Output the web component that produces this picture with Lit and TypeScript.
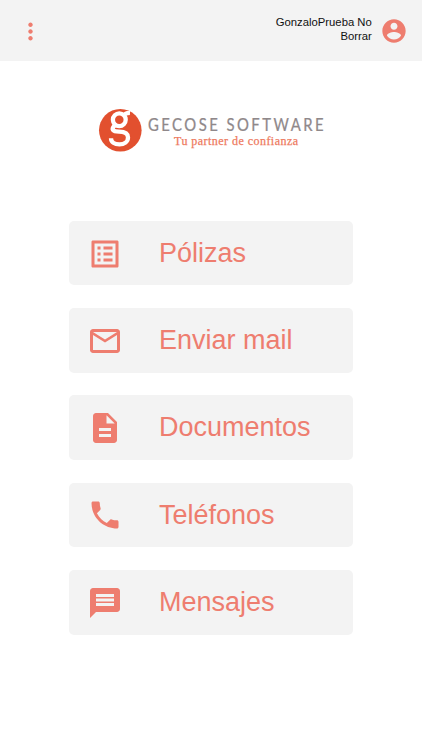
import { LitElement, html, css, svg } from "lit";
import { customElement } from "lit/decorators.js";

const ICONS: Record<string, string> = {
  list: "M19 5v14H5V5h14m1.1-2H3.9c-.5 0-.9.4-.9.9v16.2c0 .4.4.9.9.9h16.2c.4 0 .9-.5.9-.9V3.9c0-.5-.5-.9-.9-.9zM11 7h6v2h-6V7zm0 4h6v2h-6v-2zm0 4h6v2h-6v-2zM7 7h2v2H7V7zm0 4h2v2H7v-2zm0 4h2v2H7v-2z",
  mail: "M22 6c0-1.1-.9-2-2-2H4c-1.1 0-2 .9-2 2v12c0 1.1.9 2 2 2h16c1.1 0 2-.9 2-2V6zm-2 0l-8 5-8-5h16zm0 12H4V8l8 5 8-5v10z",
  doc: "M14 2H6c-1.1 0-1.99.9-1.99 2L4 20c0 1.1.89 2 1.99 2H18c1.1 0 2-.9 2-2V8l-6-6zm2 16H8v-2h8v2zm0-4H8v-2h8v2zm-3-5V3.5L18.5 9H13z",
  phone: "M6.62 10.79c1.44 2.83 3.76 5.14 6.59 6.59l2.2-2.2c.27-.27.67-.36 1.02-.24 1.12.37 2.33.57 3.57.57.55 0 1 .45 1 1V20c0 .55-.45 1-1 1-9.39 0-17-7.61-17-17 0-.55.45-1 1-1h3.5c.55 0 1 .45 1 1 0 1.25.2 2.45.57 3.57.11.35.03.74-.25 1.02l-2.2 2.2z",
  chat: "M20 2H4c-1.1 0-1.99.9-1.99 2L2 22l4-4h14c1.1 0 2-.9 2-2V4c0-1.1-.9-2-2-2zm-2 12H6v-2h12v2zm0-3H6V9h12v2zm0-3H6V6h12v2z",
  more: "M12 8c1.1 0 2-.9 2-2s-.9-2-2-2-2 .9-2 2 .9 2 2 2zm0 2c-1.1 0-2 .9-2 2s.9 2 2 2 2-.9 2-2-.9-2-2-2zm0 6c-1.1 0-2 .9-2 2s.9 2 2 2 2-.9 2-2-.9-2-2-2z",
  account: "M12 2C6.48 2 2 6.48 2 12s4.48 10 10 10 10-4.48 10-10S17.52 2 12 2zm0 3c1.66 0 3 1.34 3 3s-1.34 3-3 3-3-1.34-3-3 1.34-3 3-3zm0 14.2c-2.5 0-4.71-1.28-6-3.22.03-1.99 4-3.08 6-3.08 1.99 0 5.97 1.09 6 3.08-1.29 1.94-3.5 3.22-6 3.22z",
};

const ITEMS = [
  { icon: "list", label: "Pólizas" },
  { icon: "mail", label: "Enviar mail" },
  { icon: "doc", label: "Documentos" },
  { icon: "phone", label: "Teléfonos" },
  { icon: "chat", label: "Mensajes" },
];

const icon = (name: string) =>
  html`<svg class="icon ${name}" viewBox="0 0 24 24">${svg`<path d=${ICONS[name]}></path>`}</svg>`;

@customElement("app-root")
export class AppRoot extends LitElement {
  static styles = css`
    :host { display: block; height: 750px; background: #fff; font-family: "Liberation Sans", Arial, sans-serif; overflow: hidden; }
    .icon { display: block; flex: none; width: 36px; height: 36px; fill: #ee7d6f; }
    header { box-sizing: border-box; height: 61px; padding: 0 14.5px 0 17px; background: #f3f3f3; display: flex; align-items: center; justify-content: space-between; }
    .icon.more { width: 27px; height: 27px; margin-top: 2px; }
    .user { display: flex; align-items: center; gap: 7.7px; }
    .name { width: 100px; text-align: right; font-size: 11.3px; line-height: 13.5px; color: #111; margin-top: -2px; }
    .icon.account { width: 28px; height: 28px; }
    .logo { display: block; width: 240px; height: 50px; margin: 44px 0 0 96px; }
    .brand { font: 16.5px Lato, sans-serif; fill: #8f888a; stroke: #8f888a; stroke-width: 0.25px; }
    .slogan { font: 12px "Liberation Serif", serif; fill: #ee7a60; stroke: #ee7a60; stroke-width: 0.25px; }
    nav { display: flex; flex-direction: column; gap: 22.7px; width: 284px; margin: 65.8px 0 0 69px; }
    .card { display: flex; align-items: center; box-sizing: border-box; height: 64.6px; padding: 1.5px 0 0 18px; gap: 36px; border-radius: 5px; background: #f3f3f3; color: #ee7d6f; font-size: 27px; line-height: 30px; }
    .card .icon { margin-top: -0.5px; }
    .label { margin-top: -2px; white-space: nowrap; }
  `;

  render() {
    return html`
      <header>
        ${icon("more")}
        <div class="user"><div class="name">GonzaloPrueba No Borrar</div>${icon("account")}</div>
      </header>
      <svg class="logo" viewBox="0 0 240 50">
        <circle cx="24.3" cy="25.3" r="21.3" fill="#e2502f"></circle>
        <g fill="none" stroke="#fff" stroke-width="4.3">
          <circle cx="23.3" cy="14.8" r="6.4"></circle>
          <path d="M27.5 10.8C29 8.500 31 7.800 34 8M18.500 20.500c-3.500 4-2 6.200 4.500 6.200 6.500 0 9 2.200 9 5.800 0 4.200-3.800 6.900-8.600 6.900-4.900 0-8.400-2.300-8.400-6.200"></path>
        </g>
        <text class="brand" transform="translate(52 26) scale(.9 1)" textLength="195">GECOSE SOFTWARE</text>
        <text class="slogan" x="78" y="40.4" textLength="124">Tu partner de confianza</text>
      </svg>
      <nav>
        ${ITEMS.map((i) => html`<div class="card">${icon(i.icon)}<span class="label">${i.label}</span></div>`)}
      </nav>
    `;
  }
}
